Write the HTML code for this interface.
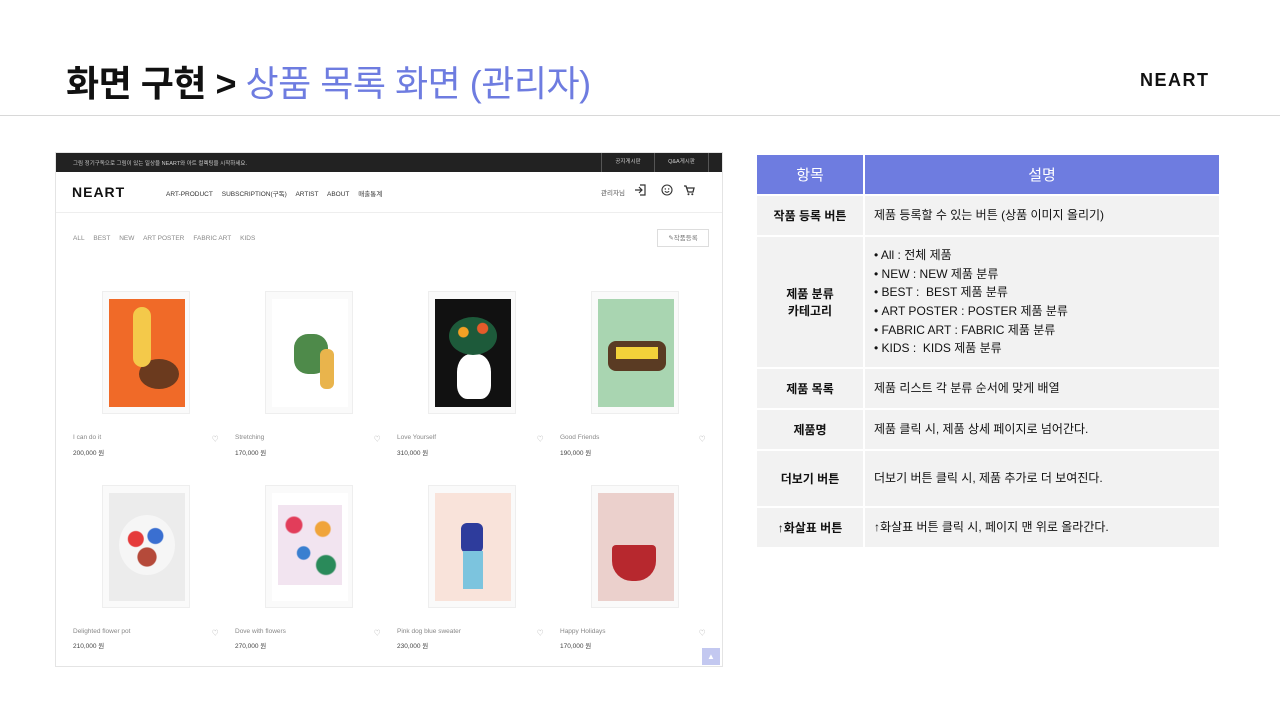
<!DOCTYPE html>
<html><head><meta charset="utf-8"><style>
*{margin:0;padding:0;box-sizing:border-box}
body{width:1280px;height:720px;background:#fff;position:relative;font-family:"Liberation Sans","Noto Sans CJK KR",sans-serif;overflow:hidden}
.a{position:absolute}
.title{left:66px;top:55px;font-size:36px;font-weight:bold;color:#111;white-space:nowrap;letter-spacing:-0.5px}
.title span{color:#6e7ce0;font-weight:normal}
.logo{left:1140px;top:70px;font-size:18px;font-weight:bold;letter-spacing:1.5px;color:#111}
.hr{left:0;top:115px;width:1280px;height:1px;background:#d8d8d8}
.shot{left:55px;top:152px;width:668px;height:515px;border:1px solid #e4e4e4;background:#fff}
.top{left:0;top:0;width:666px;height:19px;background:#222;color:#ccc;font-size:5.5px}
.s{font-size:6.5px;color:#666;white-space:nowrap}
.card{width:88px;height:123px;border:1px solid #eee;background:#fafafa}
.art{position:absolute;left:6px;top:7px;width:76px;height:108px}
.nm{font-size:6.5px;color:#888}
.pr{font-size:6.5px;color:#444}
table{position:absolute;left:755px;top:153px;width:466px;border-collapse:collapse;font-size:12px;color:#111}
td,th{border:2px solid #fff;background:#f2f2f2}
th{background:#6e7ce0;color:#fff;font-weight:normal;font-size:15px;height:41px}
td.k{width:108px;text-align:center;font-weight:bold}
td.v{padding-left:9px;line-height:18.7px}
</style></head><body>
<div class="a title">화면 구현 &gt; <span>상품 목록 화면 (관리자)</span></div>
<div class="a logo">NEART</div>
<div class="a hr"></div>
<div class="a shot">
 <div class="a top"><span class="a" style="left:17px;top:6px">그림 정기구독으로 그림이 있는 일상을 NEART와 아트 컬렉팅을 시작하세요.</span>
 <span class="a" style="left:545px;top:0;width:54px;height:19px;border-left:1px solid #555;border-right:1px solid #555;text-align:center;line-height:19px">공지게시판</span>
 <span class="a" style="left:599px;top:0;width:54px;height:19px;border-right:1px solid #555;text-align:center;line-height:19px">Q&amp;A게시판</span></div>
 <div class="a" style="left:16px;top:31px;font-size:14px;font-weight:bold;letter-spacing:1px;color:#111">NEART</div>
 <div class="a s" style="left:110px;top:35px;color:#333">ART-PRODUCT &nbsp;&nbsp;&nbsp; SUBSCRIPTION(구독) &nbsp;&nbsp;&nbsp; ARTIST &nbsp;&nbsp;&nbsp; ABOUT &nbsp;&nbsp;&nbsp; 매출통계</div>
 <div class="a s" style="left:545px;top:34px;color:#555">관리자님</div>
 <svg class="a" style="left:578px;top:31px" width="12" height="12" viewBox="0 0 12 12"><path d="M6 1h5v10H6M1 6h7M5 3l3 3-3 3" fill="none" stroke="#333" stroke-width="1.2"/></svg>
 <svg class="a" style="left:605px;top:31px" width="12" height="12" viewBox="0 0 12 12"><circle cx="6" cy="6" r="5" fill="none" stroke="#333" stroke-width="1.1"/><circle cx="4.3" cy="5" r=".7" fill="#333"/><circle cx="7.7" cy="5" r=".7" fill="#333"/><path d="M3.8 7.3q2.2 2 4.4 0" fill="none" stroke="#333"/></svg>
 <svg class="a" style="left:627px;top:31px" width="12" height="12" viewBox="0 0 12 12"><path d="M1 2h2l2 6h5l1-4H4" fill="none" stroke="#333" stroke-width="1.3"/><circle cx="5.5" cy="10.3" r="1" fill="#333"/><circle cx="9.3" cy="10.3" r="1" fill="#333"/></svg>
 <div class="a" style="left:0;top:59px;width:666px;height:1px;background:#eee"></div>
 <div class="a s" style="left:17px;top:82px;color:#888">ALL &nbsp;&nbsp;&nbsp; BEST &nbsp;&nbsp;&nbsp; NEW &nbsp;&nbsp;&nbsp; ART POSTER &nbsp;&nbsp;&nbsp; FABRIC ART &nbsp;&nbsp;&nbsp; KIDS</div>
 <div class="a s" style="left:601px;top:76px;width:52px;height:18px;border:1px solid #ddd;text-align:center;line-height:17px;color:#777">✎작품등록</div>

 <div class="a card" style="left:46px;top:138px"><div class="art" style="background:#f06a28"><div class="a" style="left:30px;top:60px;width:40px;height:30px;background:#6b3a1e;border-radius:50%"></div><div class="a" style="left:24px;top:8px;width:18px;height:60px;background:#f4c94a;border-radius:9px"></div></div></div>
 <div class="a card" style="left:209px;top:138px"><div class="art" style="background:#fff"><div class="a" style="left:22px;top:35px;width:34px;height:40px;background:#4e8a4a;border-radius:14px"></div><div class="a" style="left:48px;top:50px;width:14px;height:40px;background:#e9b44c;border-radius:6px"></div></div></div>
 <div class="a card" style="left:372px;top:138px"><div class="art" style="background:#111"><div class="a" style="left:22px;top:55px;width:34px;height:45px;background:#fff;border-radius:40% 40% 30% 30%"></div><div class="a" style="left:14px;top:18px;width:48px;height:38px;background:radial-gradient(circle at 30% 40%,#f3a024 12%,transparent 14%),radial-gradient(circle at 70% 30%,#e55b2a 12%,transparent 14%),#1d5a3a;border-radius:50%"></div></div></div>
 <div class="a card" style="left:535px;top:138px"><div class="art" style="background:#a9d5b1"><div class="a" style="left:10px;top:42px;width:58px;height:30px;background:#5a3b23;border-radius:8px"></div><div class="a" style="left:18px;top:48px;width:42px;height:12px;background:#f3d23a"></div></div></div>

 <div class="a nm" style="left:17px;top:281px">I can do it</div><div class="a pr" style="left:17px;top:294px">200,000 원</div>
 <div class="a nm" style="left:179px;top:281px">Stretching</div><div class="a pr" style="left:179px;top:294px">170,000 원</div>
 <div class="a nm" style="left:341px;top:281px">Love Yourself</div><div class="a pr" style="left:341px;top:294px">310,000 원</div>
 <div class="a nm" style="left:504px;top:281px">Good Friends</div><div class="a pr" style="left:504px;top:294px">190,000 원</div>
 <div class="a s" style="left:156px;top:280px;color:#aaa">♡</div><div class="a s" style="left:318px;top:280px;color:#aaa">♡</div><div class="a s" style="left:481px;top:280px;color:#aaa">♡</div><div class="a s" style="left:643px;top:280px;color:#aaa">♡</div>

 <div class="a card" style="left:46px;top:332px"><div class="art" style="background:#ececec"><div class="a" style="left:10px;top:22px;width:56px;height:60px;background:radial-gradient(circle at 30% 40%,#e53b3b 14%,transparent 16%),radial-gradient(circle at 65% 35%,#3a6fd1 14%,transparent 16%),radial-gradient(circle at 50% 70%,#b54a3a 18%,transparent 20%),#f6f6f6;border-radius:50%"></div></div></div>
 <div class="a card" style="left:209px;top:332px"><div class="art" style="background:#fff"><div class="a" style="left:6px;top:12px;width:64px;height:80px;background:radial-gradient(circle at 25% 25%,#e23d5a 10%,transparent 12%),radial-gradient(circle at 70% 30%,#f0a43a 10%,transparent 12%),radial-gradient(circle at 40% 60%,#3a7fd0 10%,transparent 12%),radial-gradient(circle at 75% 75%,#2a8a5a 12%,transparent 14%),#f2e4f0"></div></div></div>
 <div class="a card" style="left:372px;top:332px"><div class="art" style="background:#f9e3da"><div class="a" style="left:26px;top:30px;width:22px;height:30px;background:#2e3c9c;border-radius:6px"></div><div class="a" style="left:28px;top:58px;width:20px;height:38px;background:#7cc4de"></div></div></div>
 <div class="a card" style="left:535px;top:332px"><div class="art" style="background:#ebd0cc"><div class="a" style="left:14px;top:52px;width:44px;height:36px;background:#b7282e;border-radius:4px 4px 20px 20px"></div></div></div>

 <div class="a nm" style="left:17px;top:475px">Delighted flower pot</div><div class="a pr" style="left:17px;top:487px">210,000 원</div>
 <div class="a nm" style="left:179px;top:475px">Dove with flowers</div><div class="a pr" style="left:179px;top:487px">270,000 원</div>
 <div class="a nm" style="left:341px;top:475px">Pink dog blue sweater</div><div class="a pr" style="left:341px;top:487px">230,000 원</div>
 <div class="a nm" style="left:504px;top:475px">Happy Holidays</div><div class="a pr" style="left:504px;top:487px">170,000 원</div>
 <div class="a s" style="left:156px;top:474px;color:#aaa">♡</div><div class="a s" style="left:318px;top:474px;color:#aaa">♡</div><div class="a s" style="left:481px;top:474px;color:#aaa">♡</div><div class="a s" style="left:643px;top:474px;color:#aaa">♡</div>
 <div class="a" style="left:646px;top:495px;width:18px;height:17px;background:#c3c8f0;color:#fff;font-size:8px;text-align:center;line-height:17px">▲</div>
</div>
<table>
<tr><th>항목</th><th>설명</th></tr>
<tr style="height:41px"><td class="k">작품 등록 버튼</td><td class="v">제품 등록할 수 있는 버튼 (상품 이미지 올리기)</td></tr>
<tr style="height:132px"><td class="k">제품 분류<br>카테고리</td><td class="v">• All : 전체 제품<br>• NEW : NEW 제품 분류<br>• BEST : &nbsp;BEST 제품 분류<br>• ART POSTER : POSTER 제품 분류<br>• FABRIC ART : FABRIC 제품 분류<br>• KIDS : &nbsp;KIDS 제품 분류</td></tr>
<tr style="height:41px"><td class="k">제품 목록</td><td class="v">제품 리스트 각 분류 순서에 맞게 배열</td></tr>
<tr style="height:41px"><td class="k">제품명</td><td class="v">제품 클릭 시, 제품 상세 페이지로 넘어간다.</td></tr>
<tr style="height:57px"><td class="k">더보기 버튼</td><td class="v">더보기 버튼 클릭 시, 제품 추가로 더 보여진다.</td></tr>
<tr style="height:41px"><td class="k">↑화살표 버튼</td><td class="v">↑화살표 버튼 클릭 시, 페이지 맨 위로 올라간다.</td></tr>
</table>
</body></html>
